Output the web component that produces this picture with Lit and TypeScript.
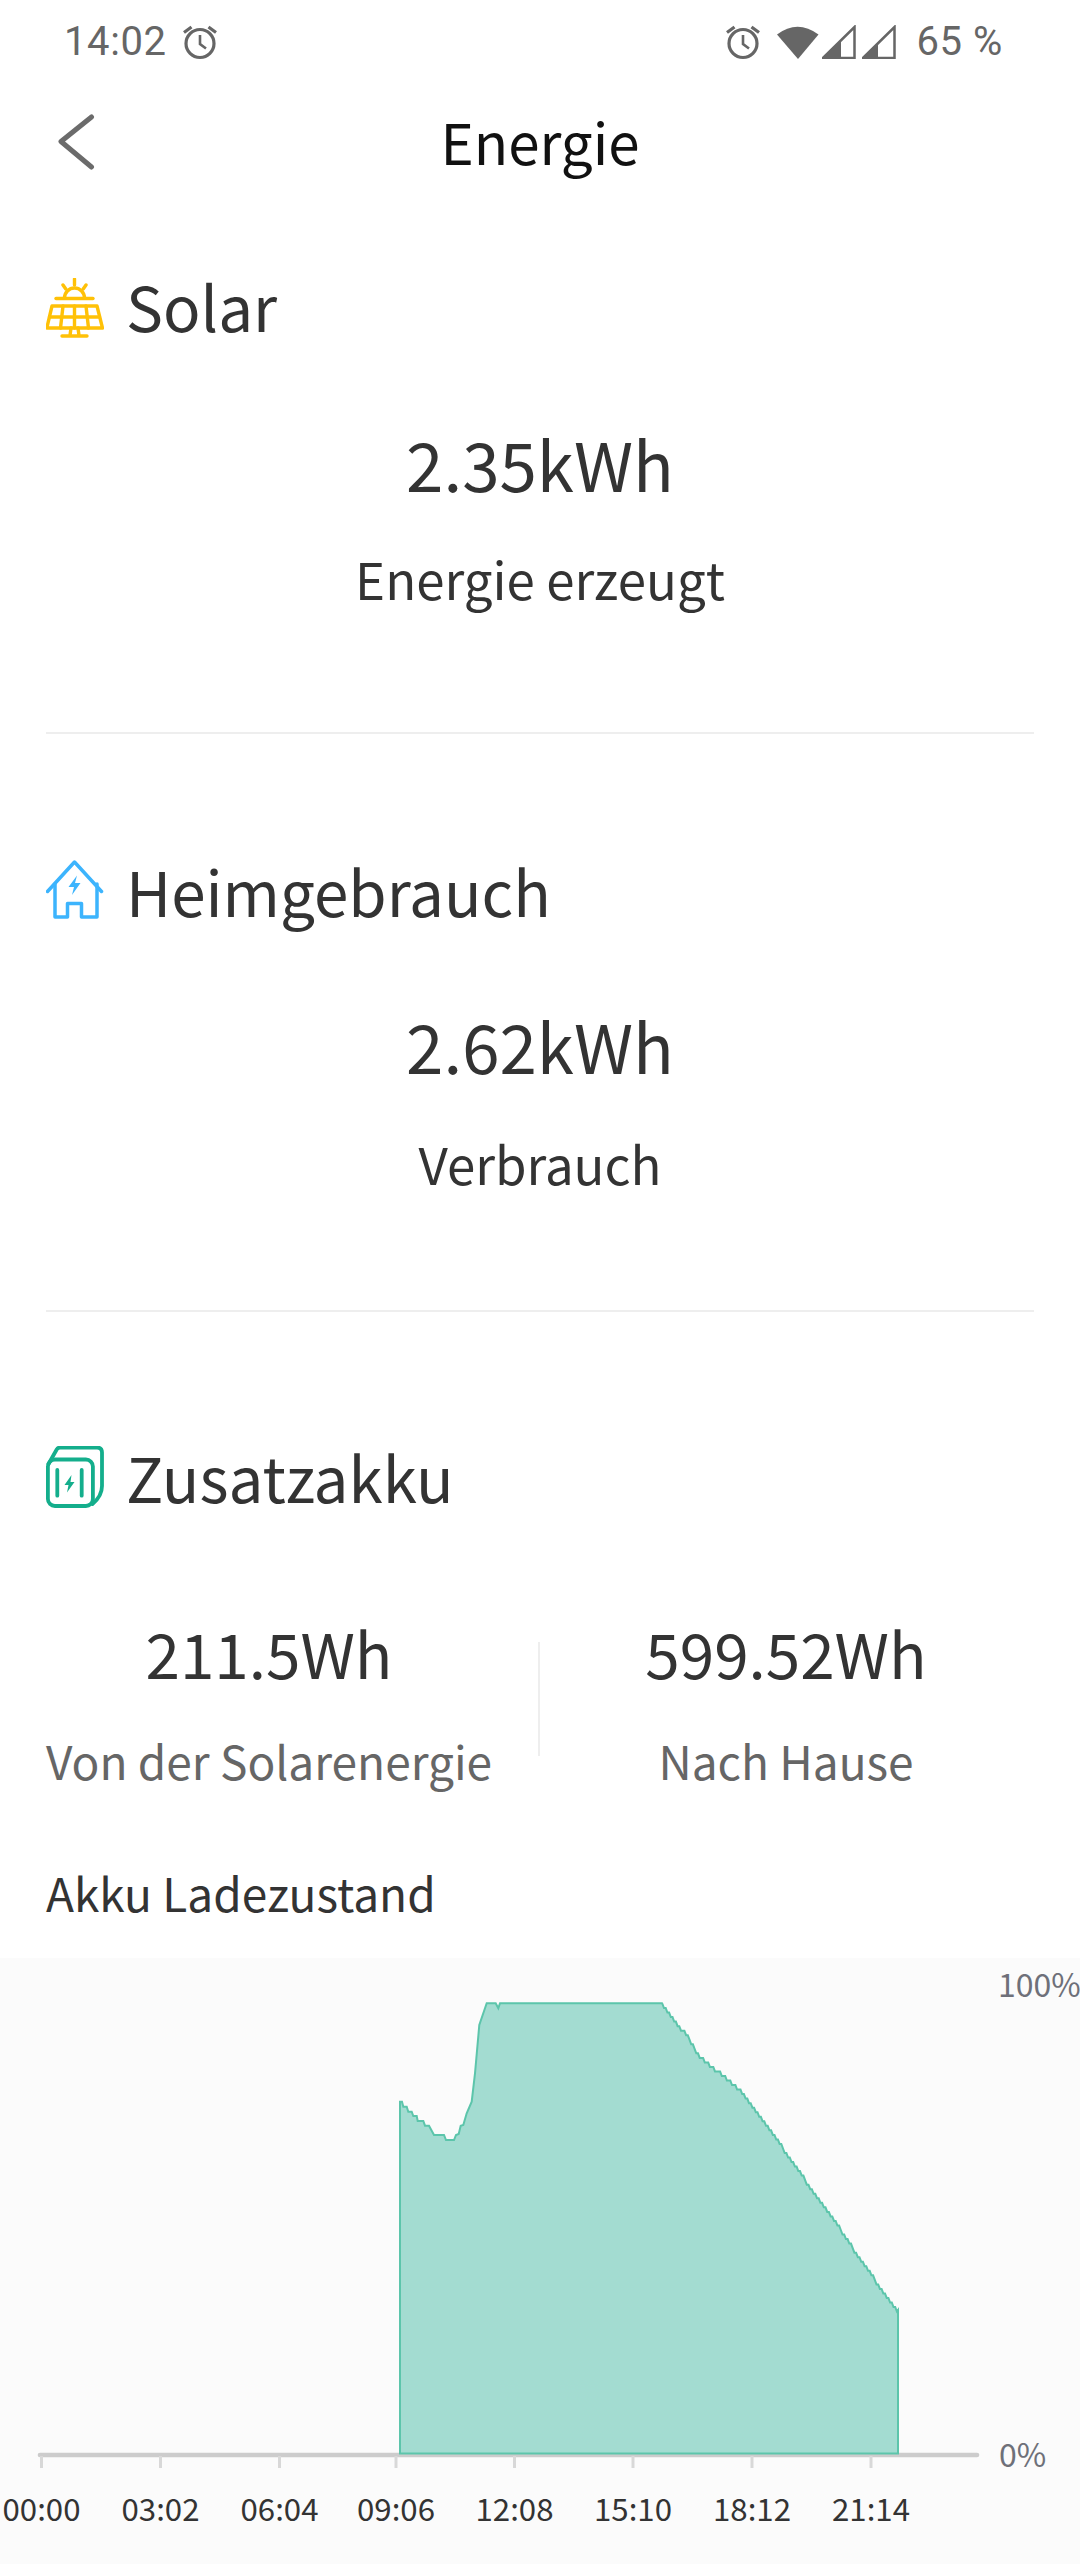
import { LitElement, html, css, svg } from "lit";
import { customElement } from "lit/decorators.js";

const LEFT: [number, number][] = [
  [60, 455],[66, 455],[70, 470],[80, 470],[85, 485],[95, 485],[100, 498],[110, 498],[113, 513],[130, 513],[135, 527],[147, 527],[155, 542],[162, 555],[192, 555],[198, 570],[222, 570],[228, 555],[236, 552],[242, 527],[250, 525],[260, 490],[275, 455],[285, 370],[298, 225],[320, 160],[347, 160],[355, 175],[360, 160],[848, 160],
];
const DESCENT: [number, number][] = [
  [662.7, 2003.5],[667, 2008],[676, 2020],[688, 2035],[700, 2055],[720, 2071],[740, 2088],[767, 2123],[803, 2175],[837, 2222],[860, 2257],[898, 2310],
];
const TOP = 1958;
const BASE = 2453.5;
function chartPoints(): string {
  const pts: [number, number][] = [[400, BASE]];
  for (const [x, y] of LEFT) pts.push([380 + x / 3, 1950 + y / 3]);
  let prev = 2003.5;
  for (let x = 664; x < 898; x += 1.7) {
    let i = 0;
    while (i < DESCENT.length - 2 && DESCENT[i + 1][0] < x) i++;
    const [a, b] = [DESCENT[i], DESCENT[i + 1]];
    const y = a[1] + ((x - a[0]) * (b[1] - a[1])) / (b[0] - a[0]);
    const q = 2003.5 + Math.ceil((y - 2003.5) / 4.53) * 4.53;
    if (q !== prev) { pts.push([x - 1.7, prev]); prev = q; }
    pts.push([x, q]);
  }
  pts.push([898, 2310], [898, BASE]);
  return pts.map(([x, y]) => `${x.toFixed(1)},${(y - TOP).toFixed(1)}`).join(" ");
}

const TICKS: [number, string][] = [
  [41.5, "00:00"],[160.5, "03:02"],[279.5, "06:04"],[396, "09:06"],[514.5, "12:08"],[633, "15:10"],[752, "18:12"],[871, "21:14"],
];

const alarm = svg`<svg class="alarm" viewBox="0 0 36 36" width="36" height="36" fill="none" stroke="#666" stroke-width="3.200">
  <circle cx="18" cy="19.500" r="14"/><path d="M18 11v9l6 4.500" stroke-width="2.600"/><path d="M2 8.500 9.500 3M34 8.500 26.500 3"/></svg>`;

@customElement("app-root")
export class AppRoot extends LitElement {
  static styles = css`
    :host { display: block; width: 1080px; height: 2564px; overflow: hidden; background: #fff; color: #333;
      font-family: "Noto Sans CJK SC", "Noto Sans", sans-serif; }
    .status { display: flex; justify-content: space-between; align-items: center; height: 84px; padding: 0 77px 0 64px;
      color: #666; font: 40px/84px Roboto, "Liberation Sans", sans-serif; letter-spacing: 0.600px; }
    .status > div { display: flex; align-items: center; }
    .status .left { gap: 15px; }
    .status .right svg { display: block; }
    .wifi { margin-left: 16px; }
    .sig1 { margin-left: 3px; }
    .sig2 { margin-left: 6px; }
    .batt { margin-left: 20px; }
    .nav { position: relative; height: 122px; box-sizing: border-box; padding-bottom: 10px; display: flex; align-items: center; justify-content: center; }
    .nav h1 { margin: 0; font-size: 56.500px; font-weight: 400; line-height: 112px; color: #111; }
    .back { position: absolute; left: 57px; top: 30px; }
    .head { display: flex; align-items: center; gap: 22px; padding-left: 46px; height: 80px; font-size: 62px; line-height: 80px; }
    .head svg { display: block; flex: none; }
    .solar-icon { margin-top: 5px; }
    .pack-icon { margin-top: 2px; }
    .metric { text-align: center; }
    .value { font-size: 67.300px; line-height: 90px; }
    .label { font-size: 51px; line-height: 70px; }
    .rule { height: 2px; background: #eee; margin: 0 46px; }
    .solar { padding-top: 59px; }
    .solar .metric { padding-top: 73px; }
    .solar .label { margin-top: 35px; }
    .solar .rule { margin-top: 119px; }
    .home { padding-top: 116px; }
    .home .metric { padding-top: 70px; }
    .home .label { margin-top: 38px; }
    .home .rule { margin-top: 112px; }
    .pack { padding-top: 124px; }
    .pair { display: grid; grid-template-columns: 538px 2px 492px; margin-top: 91px; }
    .pair .value { font-size: 62px; line-height: 90px; }
    .pair .label { font-size: 46px; line-height: 70px; margin-top: 28px; color: #666; }
    .pair .sep { background: #eee; height: 114px; margin-top: 35px; }
    .soc { margin: 62px 0 0 46px; font-size: 46px; line-height: 70px; }
    .chart { display: block; margin-top: 31px; width: 1080px; height: 606px; background: #fbfbfb; }
    .x { font-size: 31.200px; fill: #333; text-anchor: middle; }
    .y { font-size: 32px; fill: #6e7079; }
  `;

  private head(icon: unknown, title: string) {
    return html`<div class="head">${icon}<span>${title}</span></div>`;
  }

  render() {
    const solarIcon = svg`<svg class="solar-icon" viewBox="0 0 58 60" width="58" height="60" fill="none" stroke="#ffc107" stroke-width="3.400" stroke-linecap="round" stroke-linejoin="round">
      <path d="M28.500 1v6M17 7l2.800 4M40 7l-2.800 4"/>
      <path d="M18.500 20a10 10 0 0 1 20 0"/><path d="M10 20.500h37"/>
      <path d="M6 28h45l5.500 22H.8z"/><path d="M3.500 39h50M17 28l-2.500 22M28.500 28v22M40 28l2.500 22"/>
      <path d="M25 50l-1 7.500M32 50l1 7.500M16 58h25"/></svg>`;
    const homeIcon = svg`<svg viewBox="0 0 58 60" width="58" height="60" fill="none" stroke="#3cb4fd" stroke-width="3.500" stroke-linecap="round" stroke-linejoin="round">
      <path d="M1.500 31.500 28.500 2l27 29.500"/><path d="M9 24v33h12.500V43.500h14V57H51V24"/>
      <path d="M31 15.500 22.500 27H28l-2 8 8.500-12H29z" fill="#3cb4fd" stroke="none"/></svg>`;
    const packIcon = svg`<svg class="pack-icon" viewBox="0 0 58 62" width="58" height="62" fill="none" stroke="#14ae8c" stroke-width="3.800" stroke-linecap="round" stroke-linejoin="round">
      <rect x="1.900" y="13.500" width="45" height="46.500" rx="7"/>
      <path d="M2.500 18 10.700 3.500q1-2 3.500-2H51q5 0 5 5V40q0 10-9.500 18"/>
      <path d="M11.300 24v25.700M35.700 24v25.700"/>
      <path d="M25.500 29 18.500 39h4L21 46.500 28.500 36h-4z" fill="#14ae8c" stroke="none"/></svg>`;
    return html`
      <div class="status">
        <div class="left"><span class="time">14:02</span>${alarm}</div>
        <div class="right">
          ${alarm}
          <svg class="wifi" viewBox="0 0 42 36" width="42" height="36"><path d="M0 10.500Q20.500-5 41.500 10.500L21 35z" fill="#666"/></svg>
          <svg class="sig1" viewBox="0 0 34 34" width="34" height="34"><path d="M1 33 32.500 2v31z" fill="none" stroke="#666" stroke-width="2.500"/><path d="M0 34 19 15v19z" fill="#666"/></svg>
          <svg class="sig2" viewBox="0 0 34 34" width="34" height="34"><path d="M1 33 32.500 2v31z" fill="none" stroke="#666" stroke-width="2.500"/><path d="M0 34 16 18v16z" fill="#666"/></svg>
          <span class="batt">65 %</span>
        </div>
      </div>
      <div class="nav">
        <svg class="back" viewBox="0 0 40 64" width="40" height="64" fill="none" stroke="#6b6b6b" stroke-width="5" stroke-linecap="round" stroke-linejoin="round"><path d="M34.500 3 4 27.500 34.500 53"/></svg>
        <h1>Energie</h1>
      </div>
      <section class="solar">
        ${this.head(solarIcon, "Solar")}
        <div class="metric"><div class="value">2.35kWh</div><div class="label">Energie erzeugt</div></div>
        <div class="rule"></div>
      </section>
      <section class="home">
        ${this.head(homeIcon, "Heimgebrauch")}
        <div class="metric"><div class="value">2.62kWh</div><div class="label">Verbrauch</div></div>
        <div class="rule"></div>
      </section>
      <section class="pack">
        ${this.head(packIcon, "Zusatzakku")}
        <div class="pair">
          <div class="metric"><div class="value">211.5Wh</div><div class="label">Von der Solarenergie</div></div>
          <div class="sep"></div>
          <div class="metric"><div class="value">599.52Wh</div><div class="label">Nach Hause</div></div>
        </div>
        <div class="soc">Akku Ladezustand</div>
      </section>
      <svg class="chart" viewBox="0 0 1080 606" width="1080" height="606">
        <line x1="40" y1="497" x2="977" y2="497" stroke="#ccc" stroke-width="4.600" stroke-linecap="round"/>
        ${TICKS.map(([x]) => svg`<line x1=${x} x2=${x} y1="498" y2="510" stroke="#d8d8d8" stroke-width="3"/>`)}
        <polygon points=${chartPoints()} fill="#a3dcd1" stroke="#5cc5ab" stroke-width="2"/>
        ${TICKS.map(([x, t]) => svg`<text class="x" x=${x} y="562.500">${t}</text>`)}
        <text class="y" x="998" y="39">100%</text>
        <text class="y" x="999" y="509">0%</text>
      </svg>
    `;
  }
}
